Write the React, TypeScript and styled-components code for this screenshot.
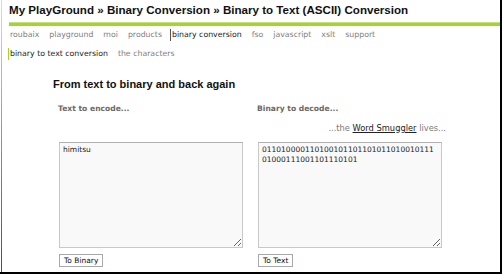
import styled, { createGlobalStyle } from "styled-components";

const Global = createGlobalStyle`
  html, body { margin: 0; padding: 0; background: #fff; }
`;

const Frame = styled.div`
  width: 502px;
  height: 274px;
  box-sizing: border-box;
  border-right: 2px solid #000;
  border-bottom: 2px solid #000;
  background: linear-gradient(180deg, #dcdcdc, #5a4a30) no-repeat 1px 0 / 1px 100%, #fff;
  overflow: hidden;
  font-family: "DejaVu Sans", Verdana, sans-serif;
`;

const Title = styled.h1`
  margin: 0;
  padding: 2px 0 0 9px;
  font: bold 11.6px/16px "Liberation Sans", Arial, sans-serif;
  color: #111;
  white-space: nowrap;
`;

const GreenBar = styled.div`
  margin: 4px 0 0 9px;
  height: 4px;
  background: linear-gradient(#c4e47a 0 1px, #a5d335 1px);
`;

const Nav = styled.nav<{ $top: number }>`
  display: flex;
  gap: 10px;
  margin: ${p => p.$top}px 0 0 10px;
  font-size: 7.8px;
  line-height: 12px;
`;

const NavItem = styled.span<{ $active?: boolean; $mark?: string }>`
  color: ${p => (p.$active ? "#222" : "#808080")};
  white-space: nowrap;
  ${p => p.$mark && `border-left: 1.5px solid ${p.$mark}; padding-left: 1px; margin-left: -2px;`}
`;

const Main = styled.main`
  padding-left: 53px;
`;

const Heading = styled.h2`
  margin: 17px 0 0;
  font: bold 11px/14px "Liberation Sans", Arial, sans-serif;
  color: #111;
`;

const Columns = styled.div`
  display: grid;
  grid-template-columns: 185px 189px;
  column-gap: 14px;
  margin: 12px 0 0 5px;
`;

const Label = styled.div`
  font-weight: bold;
  font-size: 7.6px;
  line-height: 12px;
  color: #6d6863;
`;

const Note = styled.div`
  grid-column: 2;
  margin-top: 7px;
  text-align: right;
  font-size: 8.3px;
  line-height: 12px;
  color: #7a7a7a;

  a {
    color: #222;
    text-decoration: underline;
  }
`;

const Area = styled.textarea`
  margin: 8px 0 0 1px;
  width: 184px;
  height: 106px;
  box-sizing: border-box;
  border: 1px solid #c8c8c8;
  border-top-color: #b0b0b0;
  background: #f9f9f9;
  padding: 2px 3px;
  font-family: "DejaVu Sans", Verdana, sans-serif;
  font-size: 7.5px;
  line-height: 10px;
  color: #222;
  word-break: break-all;
  outline: none;
  overflow: hidden;
`;

const Button = styled.button`
  justify-self: start;
  margin: 6px 0 0 1px;
  height: 13px;
  padding: 0 4px;
  border: 1px solid #a8a8a8;
  background: #fff;
  font-family: "DejaVu Sans", Verdana, sans-serif;
  font-size: 7.5px;
  line-height: 11px;
  color: #111;
`;

const navItems = ["roubaix", "playground", "moi", "products", "binary conversion", "fso", "javascript", "xslt", "support"];

export default function App() {
  return (
    <>
      <Global />
      <Frame>
        <Title>My PlayGround » Binary Conversion » Binary to Text (ASCII) Conversion</Title>
        <GreenBar />
        <Nav $top={3}>
          {navItems.map(item => (
            <NavItem key={item} $active={item === "binary conversion"} $mark={item === "binary conversion" ? "#555" : undefined}>
              {item}
            </NavItem>
          ))}
        </Nav>
        <Nav $top={7}>
          <NavItem $active $mark="#a5d335">binary to text conversion</NavItem>
          <NavItem>the characters</NavItem>
        </Nav>
        <Main>
          <Heading>From text to binary and back again</Heading>
          <Columns>
            <Label>Text to encode...</Label>
            <Label>Binary to decode...</Label>
            <Note>
              ...the <a href="#">Word Smuggler</a> lives...
            </Note>
            <Area defaultValue="himitsu" />
            <Area defaultValue="01101000011010010110110101101001011101000111001101110101" />
            <Button>To Binary</Button>
            <Button>To Text</Button>
          </Columns>
        </Main>
      </Frame>
    </>
  );
}
